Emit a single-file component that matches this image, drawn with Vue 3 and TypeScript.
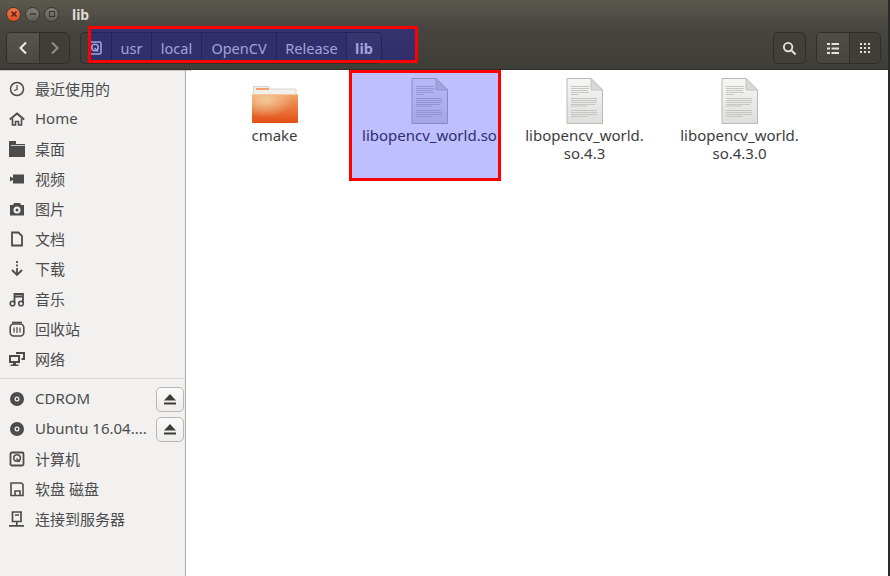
<script setup lang="ts">
const places = [
  { label: '最近使用的', icon: 'clock' },
  { label: 'Home', icon: 'home' },
  { label: '桌面', icon: 'desk' },
  { label: '视频', icon: 'video' },
  { label: '图片', icon: 'camera' },
  { label: '文档', icon: 'doc' },
  { label: '下载', icon: 'down' },
  { label: '音乐', icon: 'music' },
  { label: '回收站', icon: 'trash' },
  { label: '网络', icon: 'net' },
]
const devices = [
  { label: 'CDROM', icon: 'disc', eject: true },
  { label: 'Ubuntu 16.04....', icon: 'disc', eject: true },
  { label: '计算机', icon: 'hdd', eject: false },
  { label: '软盘 磁盘', icon: 'floppy', eject: false },
  { label: '连接到服务器', icon: 'server', eject: false },
]
const crumbs = [
  { label: 'usr', w: 40 },
  { label: 'local', w: 50 },
  { label: 'OpenCV', w: 75 },
  { label: 'Release', w: 70 },
]
const files = ['libopencv_world.so', 'libopencv_world.\nso.4.3', 'libopencv_world.\nso.4.3.0']
</script>

<template>
  <div class="win">
    <header class="head">
      <div class="titlebar">
        <span class="wb close"><svg width="8" height="8" viewBox="0 0 8 8"><path d="M1.5 1.5l5 5M6.5 1.5l-5 5" stroke="#4a1c0c" stroke-width="1.3"/></svg></span>
        <span class="wb"><svg width="8" height="8" viewBox="0 0 8 8"><path d="M1 4h6" stroke="#35342f" stroke-width="1.3"/></svg></span>
        <span class="wb"><svg width="8" height="8" viewBox="0 0 8 8"><rect x="1.5" y="1.5" width="5" height="5" fill="none" stroke="#35342f" stroke-width="1"/></svg></span>
        <span class="wtitle">lib</span>
      </div>
      <div class="toolbar">
        <div class="group nav">
          <span class="tb back"><svg width="12" height="14" viewBox="0 0 12 14"><path d="M9 1.5L3.5 7L9 12.5" fill="none" stroke="#f0efeb" stroke-width="2"/></svg></span>
          <span class="tb fwd"><svg width="12" height="14" viewBox="0 0 12 14"><path d="M3 1.5L8.500 7L3 12.5" fill="none" stroke="#8f8d85" stroke-width="2"/></svg></span>
        </div>
        <div class="path">
          <span class="crumb first"><svg width="14" height="14" viewBox="0 0 14 14"><rect x="1" y="1" width="12" height="12" rx="1.5" fill="none" stroke="#d8d6cf" stroke-width="1.6"/><circle cx="7" cy="6.5" r="3.2" fill="none" stroke="#d8d6cf" stroke-width="1.6"/><path d="M6.5 7l3.500 3.500" stroke="#d8d6cf" stroke-width="1.6"/></svg></span>
          <span v-for="c in crumbs" :key="c.label" class="crumb" :style="{ width: c.w + 'px' }">{{ c.label }}</span>
          <span class="crumb cur">lib</span>
        </div>
        <div class="spacer"></div>
        <span class="group tb solo"><svg width="15" height="15" viewBox="0 0 16 16"><circle cx="6.5" cy="6.5" r="4.5" fill="none" stroke="#e4e2dc" stroke-width="2"/><path d="M10 10l4.500 4.500" stroke="#e4e2dc" stroke-width="2.2"/></svg></span>
        <div class="group views">
          <span class="tb list"><svg width="12" height="11" viewBox="0 0 12 11"><path d="M0 1h3M4.500 1H12M0 5.500h3M4.500 5.500H12M0 10h3M4.500 10H12" stroke="#e4e2dc" stroke-width="2"/></svg></span>
          <span class="tb grid"><svg width="10" height="10" viewBox="0 0 10 10" fill="#e4e2dc"><rect x="0" y="0" width="2" height="2"/><rect x="4" y="0" width="2" height="2"/><rect x="8" y="0" width="2" height="2"/><rect x="0" y="4" width="2" height="2"/><rect x="4" y="4" width="2" height="2"/><rect x="8" y="4" width="2" height="2"/><rect x="0" y="8" width="2" height="2"/><rect x="4" y="8" width="2" height="2"/><rect x="8" y="8" width="2" height="2"/></svg></span>
        </div>
      </div>
    </header>

    <div class="body">
      <aside class="side">
        <ul class="list-block top">
          <li v-for="p in places" :key="p.label" class="row">
            <svg class="ic" width="16" height="16" viewBox="0 0 16 16">
              <template v-if="p.icon === 'clock'"><circle cx="8" cy="8" r="6.500" fill="none" stroke="#4c4c4c" stroke-width="1.5"/><path d="M8 4v4.500l-3 1" fill="none" stroke="#4c4c4c" stroke-width="1.2"/></template>
              <template v-else-if="p.icon === 'home'"><path d="M.8 8.500L8 2.500l7.200 6" fill="none" stroke="#4c4c4c" stroke-width="2"/><path d="M3.500 7.500V14h3v-3.500h3V14h3V7.500" fill="none" stroke="#4c4c4c" stroke-width="1.600"/></template>
              <template v-else-if="p.icon === 'desk'"><path d="M0 0h7v3h9v13H0z" fill="#4c4c4c"/><rect x="2" y="4" width="14" height="1" fill="#c9c8c6"/></template>
              <path v-else-if="p.icon === 'video'" d="M1 5.500l3 1.500V3.500h11v9H4V9l-3 1.500z" fill="#4c4c4c"/>
              <path v-else-if="p.icon === 'camera'" d="M1 4h3l1-2h6l1 2h3v10.500H1zM8 5.500a3.500 3.500 0 1 0 0 7a3.500 3.500 0 0 0 0-7zM8 7.500a1.500 1.500 0 1 1 0 3a1.500 1.500 0 0 1 0-3z" fill="#4c4c4c" fill-rule="evenodd"/>
              <path v-else-if="p.icon === 'doc'" d="M3 1.500h6.500l3.500 3.500v9.500H3z" fill="none" stroke="#4c4c4c" stroke-width="1.800"/>
              <path v-else-if="p.icon === 'down'" d="M8 0v2M8 3.500v2M8 7v6M3 9l5 5 5-5" fill="none" stroke="#4c4c4c" stroke-width="1.800"/>
              <template v-else-if="p.icon === 'music'"><path d="M5.500 12V3H14v9M5.500 5.500H14" fill="none" stroke="#4c4c4c" stroke-width="1.800"/><circle cx="3.500" cy="12.500" r="2.300" fill="none" stroke="#4c4c4c" stroke-width="1.600"/><circle cx="12" cy="12.500" r="2.300" fill="none" stroke="#4c4c4c" stroke-width="1.600"/></template>
              <template v-else-if="p.icon === 'trash'"><rect x="1.200" y="3" width="13.600" height="12" rx="3.500" fill="none" stroke="#4c4c4c" stroke-width="1.600"/><path d="M3 1.500h10" stroke="#4c4c4c" stroke-width="1.600"/><path d="M5 6.500v5M8 6v6M11 6.500v5" stroke="#4c4c4c" stroke-width="1.200"/></template>
              <path v-else-if="p.icon === 'net'" d="M0 4h11v8H7v1.500h2.500V15h-8v-1.500H4V12H0zM2 6v4h7V6zM7 1h9v8h-3.500V7H14V3H9v0H7z" fill="#4c4c4c" fill-rule="evenodd"/>
            </svg>
            <span class="lbl">{{ p.label }}</span>
          </li>
        </ul>
        <div class="sep"></div>
        <ul class="list-block">
          <li v-for="d in devices" :key="d.label" class="row">
            <svg class="ic" width="16" height="16" viewBox="0 0 16 16">
              <template v-if="d.icon === 'disc'"><path d="M8 1a7 7 0 1 0 0 14a7 7 0 0 0 0-14zM8 5.500a2.500 2.500 0 1 1 0 5a2.500 2.500 0 0 1 0-5z" fill="#4c4c4c" fill-rule="evenodd"/><circle cx="8" cy="8" r="1.200" fill="#4c4c4c"/></template>
              <template v-else-if="d.icon === 'hdd'"><rect x="1.500" y="1.500" width="13" height="13" rx="1.500" fill="none" stroke="#4c4c4c" stroke-width="1.800"/><circle cx="8" cy="7" r="3.300" fill="none" stroke="#4c4c4c" stroke-width="1.600"/><path d="M7.500 7.500l3 3.500" stroke="#4c4c4c" stroke-width="1.600"/></template>
              <path v-else-if="d.icon === 'floppy'" d="M2 2h10.500L14 3.500v11H2zM6 14.500V10h5v4.500" fill="none" stroke="#4c4c4c" stroke-width="1.600"/>
              <path v-else-if="d.icon === 'server'" d="M3.500 1h8.500v9.500H3.500zM7.800 11v3M0 14.800h15M6 4h4" fill="none" stroke="#4c4c4c" stroke-width="1.700"/>
            </svg>
            <span class="lbl">{{ d.label }}</span>
            <button v-if="d.eject" class="eject" type="button" aria-label="eject">
              <svg width="12" height="11" viewBox="0 0 12 11"><path d="M6 0l6 6.500H0z" fill="#3c3c3c"/><rect x="0" y="8.500" width="12" height="2" fill="#3c3c3c"/></svg>
            </button>
          </li>
        </ul>
      </aside>
      <div class="gutter"></div>
      <main class="main">
        <div class="item">
          <svg width="48" height="48" viewBox="0 0 48 48">
            <defs>
              <linearGradient id="fo" x1="0" y1="0" x2="0" y2="1"><stop offset="0" stop-color="#f0a368"/><stop offset="1" stop-color="#e24e15"/></linearGradient>
              <radialGradient id="fh" cx=".3" cy=".2" r=".6"><stop offset="0" stop-color="#f3cfa0" stop-opacity=".9"/><stop offset="1" stop-color="#f3cfa0" stop-opacity="0"/></radialGradient>
              <linearGradient id="pg" x1="0" y1="0" x2="0" y2="1"><stop offset="0" stop-color="#f6f6f5"/><stop offset="1" stop-color="#dededc"/></linearGradient>
            </defs>
            <path d="M2.500 9.500h15l3 2.500h24.500v6H2.500z" fill="#f2f0ea" stroke="#c9c7c0" stroke-width=".7"/>
            <rect x="5" y="11" width="13" height="2" fill="#f0a06a"/>
            <rect x="1" y="17" width="46" height="29" rx="1" fill="url(#fo)"/>
            <rect x="1" y="17" width="46" height="29" rx="1" fill="url(#fh)"/>
            <rect x="1" y="17" width="46" height="1" fill="#f7c9a0"/>
          </svg>
          <span class="fname">cmake</span>
        </div>
        <div v-for="f in files" :key="f" class="item">
          <svg width="48" height="48" viewBox="0 0 48 48">
            <path d="M6 1.500H30L41.500 13v33.500H6z" fill="url(#pg)" stroke="#b9b9b7"/>
            <path d="M30 1.500V13h11.500z" fill="#d8d8d6" stroke="#c4c4c2"/>
            <path d="M10 9.500h18M10 11.500h18M10 13.500h17M10 15.500h18M10 17.500h8M10 21.500h26M10 23.500h26M10 25.500h26M10 27.500h24M10 29h16M10 33.500h26M10 35.500h26M10 37.500h26M10 39.500h17" stroke="#bdbdbb" stroke-width=".8"/>
          </svg>
          <span class="fname">{{ f }}</span>
        </div>
      </main>
    </div>

    <div class="mark mark-path"></div>
    <div class="mark mark-file"></div>
  </div>
</template>

<style>
html, body { margin: 0; background: #fff; }
</style>

<style scoped>
.win {
  position: relative;
  width: 890px;
  height: 576px;
  box-sizing: border-box;
  overflow: hidden;
  background: #fff;
  border-right: 2px solid #2a2a2a;
  font-family: "Noto Sans", "Noto Sans CJK SC", sans-serif;
  color: #4c4c4c;
  font-size: 15px;
}
.head {
  height: 70px;
  box-sizing: border-box;
  background: linear-gradient(#5b584e, #47453f 28px, #3e3d38 70px);
  border-bottom: 1px solid #2f2e2a;
}
.titlebar {
  height: 28px;
  display: flex;
  align-items: center;
  padding-left: 6px;
  gap: 4px;
}
.wb {
  width: 15px;
  height: 15px;
  box-sizing: border-box;
  border-radius: 50%;
  display: flex;
  align-items: center;
  justify-content: center;
  background: linear-gradient(#817f76, #5f5d55);
  border: 1px solid #37362f;
}
.close { background: linear-gradient(#f2764a, #d9501f); }
.wtitle {
  margin-left: 9px;
  color: #dfdbd2;
  font-weight: 700;
  font-size: 14px;
}
.toolbar {
  height: 41px;
  box-sizing: border-box;
  display: flex;
  align-items: center;
  padding: 4px 7px 5px 6px;
}
.group {
  display: flex;
  height: 32px;
  box-sizing: border-box;
  border: 1px solid #2f2e2a;
  border-radius: 5px;
  overflow: hidden;
}
.tb {
  display: flex;
  align-items: center;
  justify-content: center;
  height: 100%;
}
.nav { width: 64px; }
.back { width: 32px; background: linear-gradient(#56544b, #4a4841); border-right: 1px solid #2f2e2a; }
.fwd { flex: 1; background: #3f3e39; }
.path {
  display: flex;
  height: 32px;
  box-sizing: border-box;
  margin-left: 10px;
  border: 1px solid #2f2e2a;
  border-radius: 5px;
  overflow: hidden;
  color: #d9d7cf;
  background: #403f3a;
}
.crumb {
  display: flex;
  align-items: center;
  justify-content: center;
  box-sizing: border-box;
  border-right: 1px solid #302f2b;
  font-size: 14.5px;
}
.first { width: 31px; justify-content: flex-start; padding-left: 7px; }
.cur { width: 34px; font-weight: 700; background: linear-gradient(#4a4841, #44433d); border-right: 0; }
.spacer { flex: 1; }
.solo { width: 33px; background: #403f3a; margin-right: 10px; }
.views { width: 65px; }
.list { width: 32px; background: linear-gradient(#4f4d45, #47453f); border-right: 1px solid #2f2e2a; }
.grid { flex: 1; background: #3f3e39; }

.body { display: flex; height: 506px; }
.side {
  flex: none;
  width: 186px;
  box-sizing: border-box;
  background: #f2f1f0;
  border-right: 1px solid #a9a9a7;
  border-top: 1px solid #c8c8c6;
}
.gutter { flex: none; width: 5px; border-top: 1px solid #d4d4d2; box-sizing: border-box; }
.list-block { list-style: none; margin: 0; padding: 0; }
.list-block.top { padding-top: 3px; }
.row {
  display: flex;
  align-items: center;
  height: 30px;
  padding-left: 9px;
  position: relative;
}
.ic { flex: none; }
.lbl { margin: 0 0 2px 10px; white-space: nowrap; font-size: 15px; }
.sep { height: 1px; background: #d9d9d7; margin: 4px 0 5px; }
.eject {
  position: absolute;
  left: 156px;
  top: 3px;
  width: 28px;
  height: 25px;
  padding: 0;
  border: 1px solid #b8b7b3;
  border-radius: 5px;
  background: linear-gradient(#fafafa, #eeedeb);
  display: flex;
  align-items: center;
  justify-content: center;
}
.main {
  flex: 1;
  background: #fff;
  padding: 7px 0 0 6px;
  display: grid;
  grid-template-columns: repeat(4, 155px);
  align-content: start;
}
.item {
  display: flex;
  flex-direction: column;
  align-items: center;
}
.fname {
  margin-top: 1px;
  line-height: 18px;
  white-space: pre-line;
  text-align: center;
  font-size: 15px;
  color: #3c3c3c;
}
.mark {
  position: absolute;
  box-sizing: border-box;
  border: 3px solid #ff0000;
  background: rgba(0, 0, 255, .25);
  pointer-events: none;
}
.mark-path { left: 88px; top: 26px; width: 330px; height: 37px; }
.mark-file { left: 349px; top: 70px; width: 152px; height: 111px; }
</style>
